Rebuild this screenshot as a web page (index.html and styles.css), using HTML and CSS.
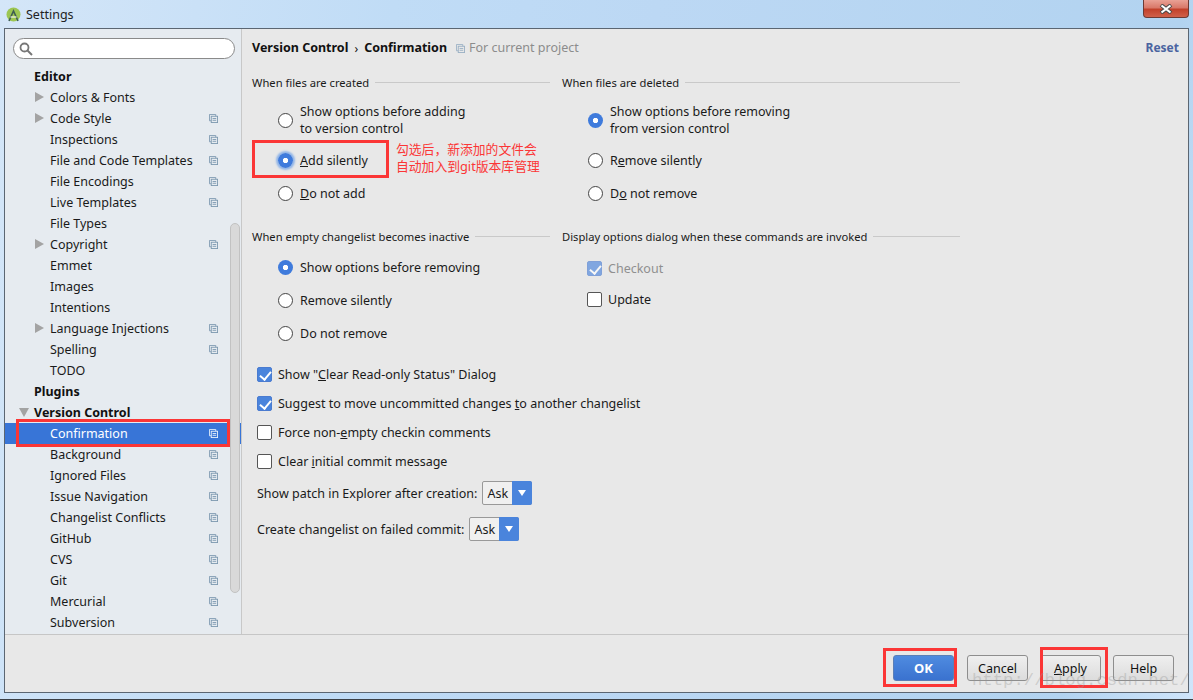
FILE: index.html
```html
<!DOCTYPE html>
<html lang="en">
<head>
    <meta charset="UTF-8">
    <title>Settings</title>
    <link rel="stylesheet" href="styles.css">
</head>
<body>
    <svg class="defs" width="0" height="0">
        <symbol id="copy" viewBox="0 0 10 10">
            <path d="M2.5 7.5H.5V.5H7.5V2.5" fill="none" stroke="currentColor"/>
            <rect x="2.5" y="2.5" width="7" height="7" fill="none" stroke="currentColor"/>
            <path d="M4 5H8M4 7H8" stroke="currentColor"/>
        </symbol>
    </svg>

    <div class="window">
        <!-- title bar -->
        <header class="titlebar">
            <svg class="app-icon" width="15" height="15" viewBox="0 0 15 15">
                <circle cx="7.5" cy="7.5" r="7" fill="#9cc653"/>
                <path d="M3 14 7.500 4 12 14" fill="none" stroke="#3f5f52" stroke-width="1.600"/>
                <path d="M4.500 10H10.500" stroke="#e8f0d8" stroke-width="1.400"/>
            </svg>
            <span class="title-text">Settings</span>
            <div class="close-btn">
                <svg width="14" height="10" viewBox="0 0 14 10">
                    <path d="M2 1 12 9M12 1 2 9" stroke="#4a4a4a" stroke-width="4"/>
                    <path d="M2.500 1.500 11.500 8.500M11.500 1.500 2.500 8.500" stroke="#fff" stroke-width="2.200"/>
                </svg>
            </div>
        </header>

        <div class="frame">
            <div class="body">
                <!-- sidebar -->
                <aside class="sidebar">
                    <div class="search">
                        <svg width="14" height="14" viewBox="0 0 14 14">
                            <circle cx="5.500" cy="5.500" r="4" fill="none" stroke="#777" stroke-width="1.800"/>
                            <path d="M8.500 8.500 13 13" stroke="#777" stroke-width="2"/>
                        </svg>
                    </div>
                    <ul class="tree">
                        <li class="head">Editor</li>
                        <li class="closed">Colors &amp; Fonts</li>
                        <li class="closed">Code Style<svg class="copy"><use href="#copy"/></svg></li>
                        <li>Inspections<svg class="copy"><use href="#copy"/></svg></li>
                        <li>File and Code Templates<svg class="copy"><use href="#copy"/></svg></li>
                        <li>File Encodings<svg class="copy"><use href="#copy"/></svg></li>
                        <li>Live Templates<svg class="copy"><use href="#copy"/></svg></li>
                        <li>File Types</li>
                        <li class="closed">Copyright<svg class="copy"><use href="#copy"/></svg></li>
                        <li>Emmet</li>
                        <li>Images</li>
                        <li>Intentions</li>
                        <li class="closed">Language Injections<svg class="copy"><use href="#copy"/></svg></li>
                        <li>Spelling<svg class="copy"><use href="#copy"/></svg></li>
                        <li>TODO</li>
                        <li class="head">Plugins</li>
                        <li class="head open">Version Control</li>
                        <li class="selected">Confirmation<svg class="copy"><use href="#copy"/></svg></li>
                        <li>Background<svg class="copy"><use href="#copy"/></svg></li>
                        <li>Ignored Files<svg class="copy"><use href="#copy"/></svg></li>
                        <li>Issue Navigation<svg class="copy"><use href="#copy"/></svg></li>
                        <li>Changelist Conflicts<svg class="copy"><use href="#copy"/></svg></li>
                        <li>GitHub<svg class="copy"><use href="#copy"/></svg></li>
                        <li>CVS<svg class="copy"><use href="#copy"/></svg></li>
                        <li>Git<svg class="copy"><use href="#copy"/></svg></li>
                        <li>Mercurial<svg class="copy"><use href="#copy"/></svg></li>
                        <li>Subversion<svg class="copy"><use href="#copy"/></svg></li>
                    </ul>
                    <div class="scrollbar"></div>
                </aside>

                <!-- settings panel -->
                <main class="panel">
                    <div class="crumbs">
                        <b>Version Control</b><span class="sep">›</span><b>Confirmation</b>
                        <svg class="copy project-icon"><use href="#copy"/></svg>
                        <span class="project">For current project</span>
                        <a class="reset">Reset</a>
                    </div>

                    <div class="groups">
                        <section class="group">
                            <h4><span>When files are created</span></h4>
                            <div class="opt two-line"><i class="radio"></i><span>Show options before adding<br>to version control</span></div>
                            <div class="opt"><i class="radio focus"></i><span><u>A</u>dd silently</span></div>
                            <div class="opt"><i class="radio"></i><span><u>D</u>o not add</span></div>
                        </section>
                        <section class="group wide">
                            <h4><span>When files are deleted</span></h4>
                            <div class="opt two-line"><i class="radio on"></i><span>Show options before removing<br>from version control</span></div>
                            <div class="opt"><i class="radio"></i><span>R<u>e</u>move silently</span></div>
                            <div class="opt"><i class="radio"></i><span>D<u>o</u> not remove</span></div>
                        </section>
                        <section class="group second">
                            <h4><span>When empty changelist becomes inactive</span></h4>
                            <div class="opt"><i class="radio on"></i><span>Show options before removing</span></div>
                            <div class="opt"><i class="radio"></i><span>Remove silently</span></div>
                            <div class="opt"><i class="radio"></i><span>Do not remove</span></div>
                        </section>
                        <section class="group wide second">
                            <h4><span>Display options dialog when these commands are invoked</span></h4>
                            <div class="opt check-opt disabled"><i class="check on"></i><span>Checkout</span></div>
                            <div class="opt check-opt"><i class="check"></i><span>Update</span></div>
                        </section>
                    </div>

                    <div class="checks">
                        <div class="row"><i class="check on"></i><span>Show "<u>C</u>lear Read-only Status" Dialog</span></div>
                        <div class="row"><i class="check on"></i><span>Suggest to move uncommitted changes <u>t</u>o another changelist</span></div>
                        <div class="row"><i class="check"></i><span>Force non-<u>e</u>mpty checkin comments</span></div>
                        <div class="row"><i class="check"></i><span>Clear <u>i</u>nitial commit message</span></div>
                    </div>

                    <div class="select-row">Show patch in Explorer after creation:<div class="select">Ask<i></i></div></div>
                    <div class="select-row">Create changelist on failed commit:<div class="select">Ask<i></i></div></div>
                </main>
            </div>

            <footer class="footer">
                <button class="btn primary">OK</button>
                <button class="btn">Cancel</button>
                <button class="btn"><u>A</u>pply</button>
                <button class="btn">Help</button>
            </footer>
        </div>
    </div>

    <!-- annotations drawn on top of the screenshot -->
    <div class="mark mark-add"></div>
    <div class="mark mark-conf"></div>
    <div class="mark mark-ok"></div>
    <div class="mark mark-apply"></div>
    <div class="note">勾选后，新添加的文件会<br>自动加入到git版本库管理</div>
    <div class="watermark">http://blog.csdn.net/</div>
</body>
</html>
```

FILE: styles.css
```css
* { box-sizing: border-box; }
html, body { margin: 0; height: 700px; overflow: hidden; }
body { font-family: "Noto Sans", "Noto Sans CJK SC", sans-serif; font-size: 12.5px; color: #1a1a1a; }
.defs { position: absolute; }

.window {
    display: flex;
    flex-direction: column;
    height: 700px;
    padding: 0 4px 6px 4px;
    background: linear-gradient(100deg, #d4e6f8 0%, #c0dcf6 30%, #bcd8f4 50%, #b2d3f0 90%, #cfe5fb 100%);
    border-bottom: 1px solid #3a3f45;
}

/* title bar */
.titlebar {
    display: flex;
    align-items: center;
    height: 28px;
    flex: none;
    padding-left: 2px;
}
.app-icon { margin-right: 5px; }
.title-text { font-size: 12.5px; color: #222; }
.close-btn {
    display: flex;
    align-items: center;
    justify-content: center;
    align-self: flex-start;
    width: 46px;
    height: 18px;
    margin-left: auto;
    border: 1px solid #6d3a34;
    border-top: none;
    border-radius: 0 0 4px 4px;
    background: linear-gradient(#e9a195 0%, #d9796a 45%, #c2412b 55%, #d0604a 100%);
}

/* client area */
.frame {
    display: flex;
    flex-direction: column;
    flex: 1;
    border: 1px solid #5b6672;
    background: #e8e8e8;
}
.body { display: flex; flex: 1; border-bottom: 1px solid #c6c6c6; min-height: 0; }

/* sidebar */
.sidebar {
    position: relative;
    width: 237px;
    flex: none;
    padding-top: 9px;
    background: #e6ebf0;
    border-right: 1px solid #c8c8c8;
}
.search {
    display: flex;
    align-items: center;
    width: 222px;
    height: 21px;
    margin-left: 8px;
    padding-left: 5px;
    background: #fff;
    border: 1px solid #8a8a8a;
    border-radius: 11px;
}
.tree { list-style: none; margin: 7px 0 0; padding: 0; }
.tree li {
    position: relative;
    height: 21px;
    line-height: 21px;
    padding-left: 45px;
    white-space: nowrap;
}
.tree .head { padding-left: 29px; font-weight: 700; color: #111; }
.tree .closed::before {
    content: "";
    position: absolute;
    left: 30px;
    top: 5px;
    border-left: 9px solid #a3a3a3;
    border-top: 5px solid transparent;
    border-bottom: 5px solid transparent;
}
.tree .open::before {
    content: "";
    position: absolute;
    left: 14px;
    top: 6px;
    border-top: 9px solid #a3a3a3;
    border-left: 5px solid transparent;
    border-right: 5px solid transparent;
}
.tree .selected { background: #3875d7; color: #fff; }
.copy {
    position: absolute;
    left: 204px;
    top: 6px;
    width: 9px;
    height: 9px;
    color: #7d99b0;
}
.selected .copy { color: #e8f0fa; }
.scrollbar {
    position: absolute;
    left: 225px;
    top: 194px;
    width: 10px;
    height: 370px;
    background: #d9d9d9;
    border: 1px solid #c2c2c2;
    border-radius: 5px;
}

/* settings panel */
.panel { flex: 1; padding: 0 0 0 10px; min-width: 0; }
.crumbs {
    display: flex;
    align-items: center;
    height: 37px;
    margin-bottom: 8px;
    color: #111;
}
.crumbs b { font-weight: 700; }
.sep { margin: 2px 6px 0 6px; font-size: 12px; }
.project-icon { position: static; margin: 1px 4px 0 9px; color: #9ab0c4; }
.project { color: #8c8c8c; }
.reset { margin-left: auto; margin-right: 9px; font-weight: 700; font-size: 12px; color: #4a64a0; }

.groups {
    display: grid;
    grid-template-columns: 298px 398px;
    column-gap: 12px;
}
.group { height: 154px; }
.group.second { height: 131px; }
h4 {
    display: flex;
    align-items: center;
    height: 16px;
    margin: 0 0 12px;
    font-size: 11.2px;
    font-weight: 400;
    white-space: nowrap;
}
h4::after { content: ""; flex: 1; height: 1px; margin-left: 6px; background: #c9c9c9; }
.second h4 { margin-bottom: 7px; }
.opt {
    display: flex;
    align-items: center;
    height: 33px;
    padding-left: 26px;
}
.opt.two-line { height: 36px; line-height: 17px; margin-bottom: 6px; }
.opt .radio { margin-right: 7px; }
.check-opt { height: 31px; padding-left: 25px; }
.check-opt .check { margin-right: 6px; }
.check-opt.disabled { margin-top: 9px; }
.disabled { color: #8f8f8f; }
.disabled .check { opacity: .65; }

.radio {
    flex: none;
    width: 15px;
    height: 15px;
    background: #fff;
    border: 1px solid #444;
    border-radius: 50%;
}
.radio.on, .radio.focus {
    border: none;
    background: radial-gradient(circle, #fff 0 2.300px, #3f7bdc 3px);
}
.radio.focus { box-shadow: 0 0 2px 2px #8fb4e8; }

.check {
    flex: none;
    display: block;
    width: 15px;
    height: 15px;
    background: #fff;
    border: 1px solid #555;
    border-radius: 2px;
}
.check.on {
    position: relative;
    background: #4a84dc;
    border: 1px solid #4a7bd0;
}
.check.on::after {
    content: "";
    position: absolute;
    left: 4px;
    top: 1px;
    width: 5px;
    height: 9px;
    border: solid #fff;
    border-width: 0 2px 2px 0;
    transform: rotate(40deg);
}

.checks { padding-left: 5px; margin-top: 1px; }
.row { display: flex; align-items: center; height: 29px; }
.row .check { margin-right: 6px; }

.select-row {
    display: flex;
    align-items: center;
    height: 24px;
    margin: 8px 0 12px 5px;
}
.checks + .select-row { margin-top: 5px; }
.select {
    display: flex;
    align-items: center;
    justify-content: space-between;
    width: 50px;
    height: 24px;
    margin-left: 5px;
    padding-left: 4px;
    background: #f0f0f0;
    border: 1px solid #999;
    border-radius: 2px;
}
.select i {
    display: flex;
    align-items: center;
    justify-content: center;
    width: 20px;
    height: 24px;
    margin-right: -1px;
    background: #4a84dc;
    border-radius: 0 2px 2px 0;
}
.select i::after {
    content: "";
    border-top: 6px solid #fff;
    border-left: 4.500px solid transparent;
    border-right: 4.500px solid transparent;
}

/* footer */
.footer {
    display: flex;
    justify-content: flex-end;
    align-items: center;
    gap: 12px;
    height: 57px;
    flex: none;
    padding: 9px 14px 0 0;
}
.btn {
    width: 61px;
    height: 26px;
    padding: 0;
    font: inherit;
    color: #111;
    background: linear-gradient(#efefef, #dcdcdc);
    border: 1px solid #8e8e8e;
    border-radius: 3px;
}
.btn.primary {
    margin-right: 1px;
    font-weight: 700;
    font-size: 13px;
    color: #fff;
    background: linear-gradient(#4f8be0, #3a72cf);
    border-color: #5a7fb8;
}

/* annotations */
.mark { position: absolute; border: 3px solid #fb3636; }
.mark-add { left: 252px; top: 140px; width: 137px; height: 38px; }
.mark-conf { left: 16px; top: 419px; width: 214px; height: 28px; }
.mark-ok { left: 883px; top: 648px; width: 74px; height: 39px; }
.mark-apply { left: 1040px; top: 647px; width: 68px; height: 41px; }
.note {
    position: absolute;
    left: 396px;
    top: 141px;
    font-size: 12.8px;
    line-height: 17px;
    color: #fb3636;
    white-space: nowrap;
}
.watermark {
    position: absolute;
    left: 972px;
    top: 671px;
    font-family: "Liberation Mono", monospace;
    font-size: 17.300px;
    color: rgba(150, 150, 150, .35);
    white-space: nowrap;
}
```
